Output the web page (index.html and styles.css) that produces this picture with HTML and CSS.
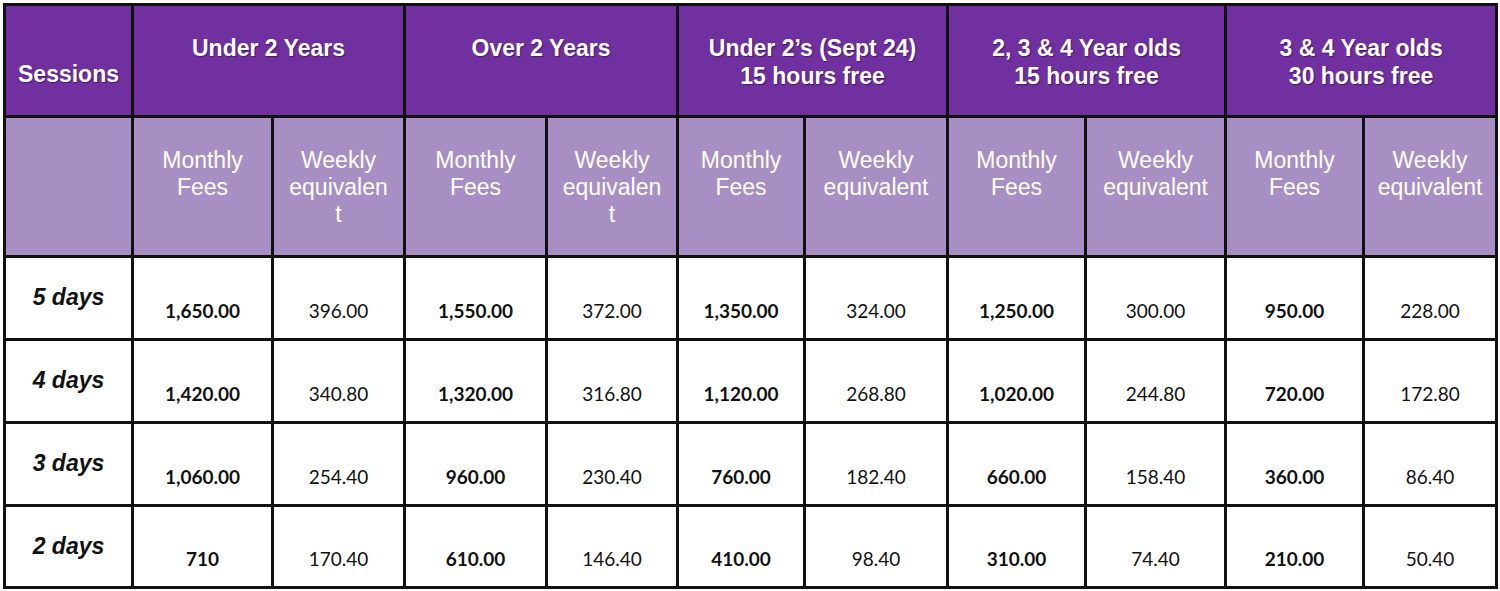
FILE: index.html
```html
<!DOCTYPE html>
<html lang="en">
<head>
<meta charset="utf-8">
<title>Fees</title>
<link rel="stylesheet" href="styles.css">
</head>
<body>
<table class="fees">
  <colgroup>
    <col class="c0"><col class="c1"><col class="c2"><col class="c3"><col class="c4"><col class="c5"><col class="c6"><col class="c7"><col class="c8"><col class="c9"><col class="c10">
  </colgroup>
  <thead>
    <tr class="head">
      <th class="sessions">Sessions</th>
      <th colspan="2">Under 2 Years</th>
      <th colspan="2">Over 2 Years</th>
      <th colspan="2">Under 2’s (Sept 24)<br>15 hours free</th>
      <th colspan="2">2, 3 &amp; 4 Year olds<br>15 hours free</th>
      <th colspan="2">3 &amp; 4 Year olds<br>30 hours free</th>
    </tr>
    <tr class="sub">
      <th></th>
      <th>Monthly<br>Fees</th>
      <th>Weekly<br>equivalen<br>t</th>
      <th>Monthly<br>Fees</th>
      <th>Weekly<br>equivalen<br>t</th>
      <th>Monthly<br>Fees</th>
      <th>Weekly<br>equivalent</th>
      <th>Monthly<br>Fees</th>
      <th>Weekly<br>equivalent</th>
      <th>Monthly<br>Fees</th>
      <th>Weekly<br>equivalent</th>
    </tr>
  </thead>
  <tbody>
    <tr>
      <th class="day">5 days</th>
      <td class="m">1,650.00</td><td>396.00</td>
      <td class="m">1,550.00</td><td>372.00</td>
      <td class="m">1,350.00</td><td>324.00</td>
      <td class="m">1,250.00</td><td>300.00</td>
      <td class="m">950.00</td><td>228.00</td>
    </tr>
    <tr>
      <th class="day">4 days</th>
      <td class="m">1,420.00</td><td>340.80</td>
      <td class="m">1,320.00</td><td>316.80</td>
      <td class="m">1,120.00</td><td>268.80</td>
      <td class="m">1,020.00</td><td>244.80</td>
      <td class="m">720.00</td><td>172.80</td>
    </tr>
    <tr>
      <th class="day">3 days</th>
      <td class="m">1,060.00</td><td>254.40</td>
      <td class="m">960.00</td><td>230.40</td>
      <td class="m">760.00</td><td>182.40</td>
      <td class="m">660.00</td><td>158.40</td>
      <td class="m">360.00</td><td>86.40</td>
    </tr>
    <tr class="last">
      <th class="day">2 days</th>
      <td class="m">710</td><td>170.40</td>
      <td class="m">610.00</td><td>146.40</td>
      <td class="m">410.00</td><td>98.40</td>
      <td class="m">310.00</td><td>74.40</td>
      <td class="m">210.00</td><td>50.40</td>
    </tr>
  </tbody>
</table>
</body>
</html>
```

FILE: styles.css
```css
html, body {
  margin: 0;
  padding: 0;
  background: #ffffff;
}

.fees {
  margin: 3px;
  width: 1494px;
  table-layout: fixed;
  border-collapse: collapse;
  border: 3px solid #111;
  font-family: "Liberation Sans", Arial, sans-serif;
}

.c0 { width: 128px; }
.c1 { width: 140px; }
.c2 { width: 132px; }
.c3 { width: 142px; }
.c4 { width: 131px; }
.c5 { width: 127px; }
.c6 { width: 143px; }
.c7 { width: 138px; }
.c8 { width: 140px; }
.c9 { width: 138px; }
.c10 { width: 133px; }

.fees th,
.fees td {
  border: 3px solid #111;
  padding: 0;
  text-align: center;
  box-sizing: border-box;
}

.fees .head th {
  background: #7030a0;
  color: #ffffff;
  font-weight: bold;
  font-size: 23px;
  line-height: 28px;
  height: 112px;
  vertical-align: top;
  padding-top: 28px;
  text-shadow: 1px 1px 1px rgba(40, 0, 60, 0.55);
}

.fees .head th.sessions {
  vertical-align: bottom;
  padding-top: 0;
  padding-bottom: 27px;
}

.fees .sub th {
  background: #a88fc3;
  color: #ffffff;
  font-weight: normal;
  font-size: 23px;
  line-height: 27px;
  height: 140px;
  vertical-align: top;
  padding-top: 29px;
}

.fees tbody th.day {
  font-weight: bold;
  font-style: italic;
  font-size: 23px;
  line-height: 28px;
  color: #111;
  vertical-align: middle;
  height: 83px;
  padding-bottom: 2px;
}

.fees tbody td {
  font-family: Lato, "Open Sans", sans-serif;
  font-size: 19px;
  line-height: 22px;
  color: #111;
  vertical-align: bottom;
  padding-bottom: 16px;
  height: 83px;
}

.fees tbody td.m {
  font-weight: bold;
}

.fees .last th.day,
.fees .last td {
  height: 82px;
}
```
